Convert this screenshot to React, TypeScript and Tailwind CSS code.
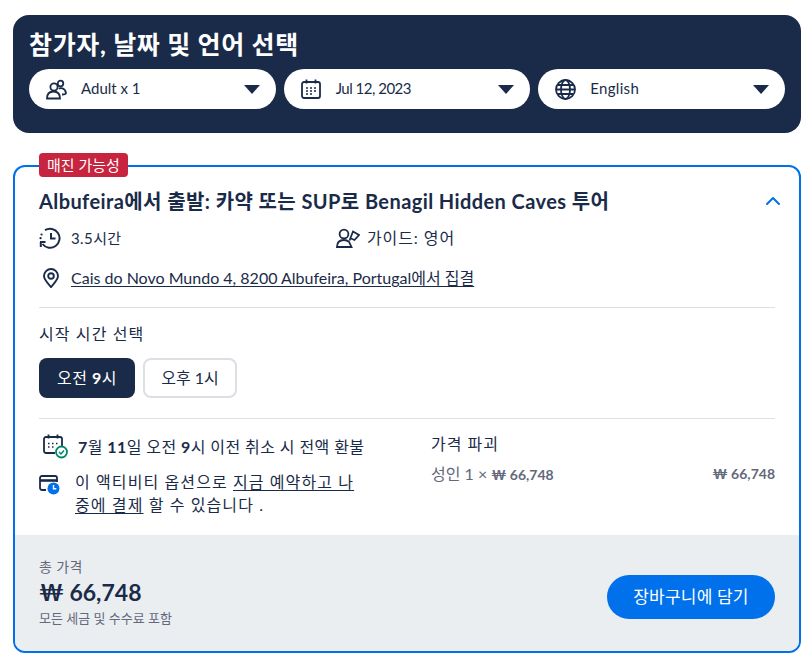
import { ChevronUp } from "lucide-react";

const font = "font-['Lato','Noto_Sans_CJK_KR',sans-serif]";

function Caret() {
  return (
    <svg width="16" height="9" viewBox="0 0 16 9" className="ml-auto shrink-0">
      <path d="M0 0h16L8 9z" fill="#1a2b49" />
    </svg>
  );
}

function PeopleIcon() {
  return (
    <svg width="21" height="21" viewBox="0 0 21 21" fill="none" stroke="#1a2b49" strokeWidth="1.8">
      <circle cx="8" cy="8" r="3.6" />
      <circle cx="14.500" cy="4.500" r="2.800" />
      <path d="M1 19.500c0-4.500 2.500-7 6.500-7s6.500 2.500 6.500 7z" />
      <path d="M13 10c1-1.500 6-1.500 7 4 0 1-1.500 1.500-4 1.500" />
    </svg>
  );
}

function CalendarIcon() {
  return (
    <svg width="20" height="20" viewBox="0 0 20 20" fill="none" stroke="#1a2b49" strokeWidth="1.8">
      <rect x="1" y="3" width="18" height="16" rx="2" />
      <path d="M5.500 0.500v4M14.500 0.500v4" />
      <path d="M5 9h2M9 9h2M13 9h2M5 12h2M9 12h2M13 12h2M5 15h2M9 15h2" strokeWidth="1.500" />
    </svg>
  );
}

function GlobeIcon() {
  return (
    <svg width="21" height="21" viewBox="0 0 21 21" fill="none" stroke="#1a2b49" strokeWidth="1.8">
      <circle cx="10.500" cy="10.500" r="9.500" />
      <ellipse cx="10.500" cy="10.500" rx="4.500" ry="9.500" />
      <path d="M1 10.500h19M2.500 6h16M2.500 15h16" />
    </svg>
  );
}

function Select({ icon, label, spacing }: { icon: React.ReactNode; label: string; spacing: string }) {
  return (
    <div className="flex h-10 flex-1 items-center rounded-[20px] bg-white pl-[17px] pr-[16px]">
      <div className="flex w-[35px] shrink-0 items-center">{icon}</div>
      <span className={`pb-[2px] text-[15px] text-[#1a2b49] ${spacing}`}>{label}</span>
      <Caret />
    </div>
  );
}

function HistoryIcon() {
  return (
    <svg width="23" height="22" viewBox="0 0 23 22" fill="none" stroke="#1a2b49" strokeWidth="2">
      <path d="M6 3.200A9.500 9.500 0 1 1 3.500 17" />
      <path d="M12 6v5.500h4.500" />
      <path d="M1 15h5.500M1.800 20v-5" />
      <path d="M1.500 11.200h.1M2.500 7.500h.1" strokeLinecap="round" strokeWidth="2.200" />
    </svg>
  );
}

function GuideIcon() {
  return (
    <svg width="24" height="20" viewBox="0 0 24 20" fill="none" stroke="#1a2b49" strokeWidth="1.800">
      <circle cx="8" cy="6" r="4.400" />
      <path d="M1 19c0-4.500 2.500-7 7-7 2 0 3.500.5 5 1.700l2.500 5.300z" />
      <path d="M0.500 19h15.500" />
      <path d="M13.500 12.500L17 3.500l6 3.500-4.500 5-3.500-1.500" />
    </svg>
  );
}

function PinIcon() {
  return (
    <svg width="16" height="20" viewBox="0 0 16 20" fill="none" stroke="#1a2b49" strokeWidth="1.900">
      <path d="M8 19C4 14.500 1 11.500 1 8a7 7 0 0 1 14 0c0 3.500-3 6.500-7 11z" />
      <circle cx="8" cy="8" r="2.800" />
    </svg>
  );
}

function CalendarCheckIcon() {
  return (
    <svg width="25" height="25" viewBox="0 0 25 25" fill="none">
      <g stroke="#1a2b49" strokeWidth="1.800">
        <path d="M12 19H3a2 2 0 0 1-2-2V5a2 2 0 0 1 2-2h14a2 2 0 0 1 2 2v7" />
        <path d="M5.500 0.500v4M14.500 0.500v4" />
        <path d="M5 9.500h1.500M9 9.500h1.500M13 9.500h1.500M5 13h1.500M9 13h1.500" strokeWidth="1.500" />
      </g>
      <circle cx="18.500" cy="18" r="5.500" fill="#fff" stroke="#008768" strokeWidth="1.800" />
      <path d="M16 18l2 2 3-3.500" stroke="#008768" strokeWidth="1.500" />
    </svg>
  );
}

function CardClockIcon() {
  return (
    <svg width="21" height="20" viewBox="0 0 21 20" fill="none">
      <g stroke="#1a2b49" strokeWidth="1.800">
        <path d="M7 15H3a2 2 0 0 1-2-2V3a2 2 0 0 1 2-2h13a2 2 0 0 1 2 2v4" />
        <path d="M1 5.500h17" strokeWidth="2.600" />
      </g>
      <circle cx="14.500" cy="13.500" r="6" fill="#0071eb" />
      <path d="M14.500 10v3.800h2.800" stroke="#fff" strokeWidth="1.400" />
    </svg>
  );
}

export default function App() {
  return (
    <div className={`${font} min-h-[668px] bg-white pb-[15px] pl-[13px] pr-[11px] pt-[15px] text-[#1a2b49]`}>
      <section className="h-[118px] rounded-[16px] bg-[#1a2b49] px-4 pt-[12px]">
        <h2 className="text-[25px] font-bold leading-[34px] tracking-[0.65px] text-white">참가자, 날짜 및 언어 선택</h2>
        <div className="mt-[8px] flex gap-2">
          <Select icon={<PeopleIcon />} label="Adult x 1" spacing="" />
          <Select icon={<CalendarIcon />} label="Jul 12, 2023" spacing="tracking-[-0.5px]" />
          <Select icon={<GlobeIcon />} label="English" spacing="tracking-[0.3px]" />
        </div>
      </section>

      <section className="relative mt-8 h-[488px] overflow-visible rounded-[12px] border-2 border-[#0071eb]">
        <span className="absolute left-[24px] top-[-14px] rounded-[4px] bg-[#c7243f] px-2 text-[15px] leading-[24px] text-white">
          매진 가능성
        </span>
        <div className="px-6 pt-[20px]">
          <div className="flex items-center justify-between">
            <h3 className="text-[20px] font-bold leading-[28px] tracking-[0.41px]">Albufeira에서 출발: 카약 또는 SUP로 Benagil Hidden Caves 투어</h3>
            <ChevronUp size={24} color="#0071eb" strokeWidth={2} className="mr-[-10px]" />
          </div>
          <div className="mt-[11px] flex h-6 items-center">
            <div className="flex w-[297px] items-center gap-[9px]">
              <HistoryIcon />
              <span className="text-[15px] tracking-[0.4px]">3.5시간</span>
            </div>
            <div className="flex items-center gap-[7px]">
              <GuideIcon />
              <span className="text-[16px] tracking-[0.9px]">가이드: 영어</span>
            </div>
          </div>
          <div className="mt-[16px] flex h-6 items-center gap-[12px] pl-[4px]">
            <PinIcon />
            <span className="text-[16px] underline underline-offset-2">Cais do Novo Mundo 4, 8200 Albufeira, Portugal에서 집결</span>
          </div>
          <div className="mt-[17px] h-px bg-[#dcdfe4]" />
          <p className="mt-[15px] text-[16px] leading-[22px] tracking-[1.1px]">시작 시간 선택</p>
          <div className="mt-[13px] flex gap-2">
            <button className="h-10 w-[96px] rounded-[8px] bg-[#1a2b49] text-[16px] tracking-[0.5px] text-white">오전 <b>9</b>시</button>
            <button className="h-10 w-[94px] rounded-[8px] border-2 border-[#dcdfe4] text-[16px]">오후 1시</button>
          </div>
          <div className="mt-5 h-px bg-[#dcdfe4]" />
          <div className="mt-[14px] flex">
            <div className="w-[392px]">
              <div className="mt-px flex items-center gap-[10px] pl-[4px]">
                <CalendarCheckIcon />
                <span className="text-[16px] tracking-[0.4px]"><b>7</b>월 <b>11</b>일 오전 <b>9</b>시 이전 취소 시 전액 환불</span>
              </div>
              <div className="mt-[11px] flex items-start gap-[15px]">
                <div className="pt-[5px]"><CardClockIcon /></div>
                <p className="w-[282px] text-[16px] leading-[23px] tracking-[1.1px]">
                  이 액티비티 옵션으로 <span className="underline underline-offset-2">지금 예약하고 나중에 결제</span> 할 수 있습니다 .
                </p>
              </div>
            </div>
            <div className="flex-1">
              <p className="text-[16px] leading-[22px] tracking-[1px]">가격 파괴</p>
              <div className="mt-[9px] flex justify-between text-[14px] leading-[20px] text-[#63687a]">
                <span><span className="text-[16px]">성인 1 × </span><b className="font-bold">₩ 66,748</b></span>
                <b className="font-bold">₩ 66,748</b>
              </div>
            </div>
          </div>
        </div>
        <div className="absolute inset-x-0 bottom-0 flex h-[116px] items-center justify-between rounded-b-[10px] bg-[#ebeef1] px-6">
          <div className="mb-[2px]">
            <p className="text-[14px] leading-[18px] tracking-[0.4px] text-[#63687a]">총 가격</p>
            <p className="text-[23px] font-bold leading-[32px]">₩ 66,748</p>
            <p className="mt-[1px] text-[13px] leading-[18px] text-[#63687a]">모든 세금 및 수수료 포함</p>
          </div>
          <button className="mt-2 h-11 w-[168px] rounded-[22px] bg-[#0071eb] text-[17px] tracking-[0.2px] text-white">장바구니에 담기</button>
        </div>
      </section>
    </div>
  );
}
